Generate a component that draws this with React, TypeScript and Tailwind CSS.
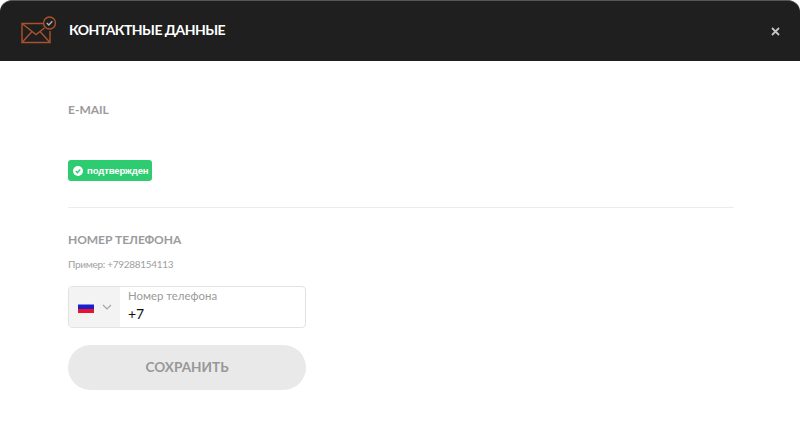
export default function App() {
  return (
    <div className="w-[800px] h-[448px] bg-white overflow-hidden font-['Lato','Noto_Sans',sans-serif]">
      <header className="h-[61px] bg-[#1f1f1f] rounded-t-[12px] border-t border-[#555] flex items-center pl-[21px] pr-[20px]">
        <svg width="36" height="28" viewBox="0 0 36 28" fill="none" stroke="#a9522c" strokeWidth="1.4" className="mt-[-2px]">
          <path d="M23 7.5H1V26.5H29V15" />
          <path d="M1 7.5L15 18.5L23.5 12" />
          <path d="M1 26.5L11 15.5M29 26.5L19 15.5" />
          <circle cx="28.5" cy="7" r="6" />
          <path d="M25.8 7L27.8 9L31.3 5.2" stroke="#b8b0aa" />
        </svg>
        <h1 className="ml-[12px] text-[14px] font-bold text-white leading-none tracking-[-0.55px] mt-[-3px]">КОНТАКТНЫЕ ДАННЫЕ</h1>
        <svg width="9" height="9" viewBox="0 0 9 9" className="ml-auto mt-[1px]" stroke="#c4c4c4" strokeWidth="1.8">
          <path d="M1 1L8 8M8 1L1 8" />
        </svg>
      </header>
      <main className="px-[68px] pt-[41px]">
        <h2 className="text-[12px] leading-[16px] font-bold text-[#9b9b9b]">E-MAIL</h2>
        <div className="mt-[42px] w-[84px] h-[21px] bg-[#2ecc71] rounded-[3px] flex items-center pl-[5px] text-white">
          <svg width="10" height="10" viewBox="0 0 10 10" className="shrink-0">
            <circle cx="5" cy="5" r="5" fill="white" />
            <path d="M2.8 5.1L4.4 6.7L7.3 3.6" fill="none" stroke="#2ecc71" strokeWidth="1.4" />
          </svg>
          <span className="ml-[4px] text-[9.5px] font-bold font-['Liberation_Sans',sans-serif] leading-none tracking-[-0.1px]">подтвержден</span>
        </div>
        <div className="mt-[26px] w-[666px] border-t border-[#ececec]" />
        <h2 className="mt-[24px] text-[12px] leading-[16px] font-bold text-[#9b9b9b] tracking-[-0.07px]">НОМЕР ТЕЛЕФОНА</h2>
        <p className="mt-[9px] text-[10px] leading-[14px] text-[#a0a0a0] tracking-[-0.3px]">Пример: +79288154113</p>
        <div className="mt-[15px] w-[238px] h-[42px] flex border border-[#e2e2e2] rounded-[4px] overflow-hidden">
          <div className="w-[51px] bg-[#f3f3f3] flex items-center pl-[9px] shrink-0">
            <svg width="16" height="11" viewBox="0 0 16 11" className="shrink-0 mt-[1px]">
              <rect width="16" height="3" fill="#f4f4f8" />
              <rect y="2.5" width="16" height="4.5" fill="#1a1fd0" />
              <rect y="7" width="16" height="4" fill="#e8122a" />
            </svg>
            <svg width="10" height="6" viewBox="0 0 10 6" className="ml-[8px]" fill="none" stroke="#a5a5a5" strokeWidth="1.2">
              <path d="M1 1L5 5L9 1" />
            </svg>
          </div>
          <div className="pl-[8px] flex flex-col">
            <span className="mt-[1px] text-[11.4px] leading-[15px] text-[#9a9a9a]">Номер телефона</span>
            <span className="mt-[3px] text-[14px] leading-[16px] text-[#111]">+7</span>
          </div>
        </div>
        <button className="mt-[17px] w-[238px] h-[45px] rounded-full bg-[#e9e9e9] text-[#979797] text-[13.6px] font-bold">СОХРАНИТЬ</button>
      </main>
    </div>
  );
}
